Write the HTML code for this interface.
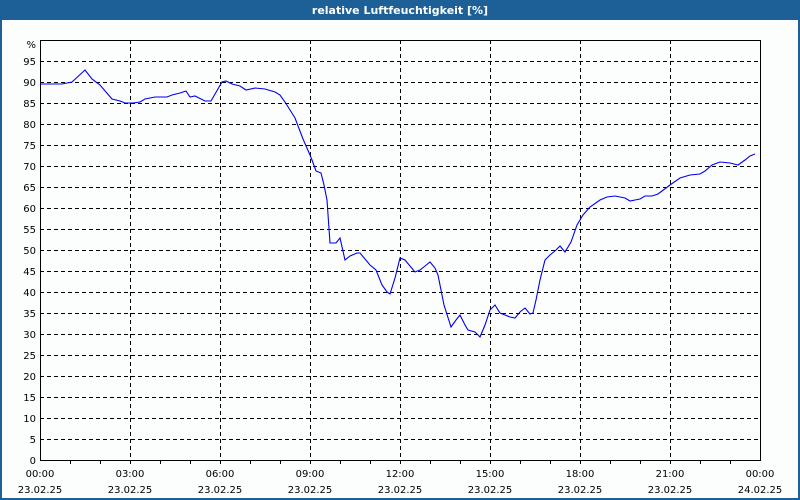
<!DOCTYPE html>
<html><head><meta charset="utf-8"><style>
html,body{margin:0;padding:0;background:#fff;}
body{width:800px;height:500px;position:relative;overflow:hidden;font-family:Tahoma,"DejaVu Sans","Liberation Sans",sans-serif;}
</style></head><body>
<svg width="800" height="500" xmlns="http://www.w3.org/2000/svg" style="position:absolute;left:0;top:0" font-family="'DejaVu Sans','Liberation Sans',sans-serif">
<rect x="0" y="0" width="800" height="500" fill="#1d5f97"/>
<rect x="2" y="20" width="796" height="478" fill="#fcfefd"/>
<text x="400" y="14" fill="#fff" font-size="11" font-weight="bold" text-anchor="middle">relative Luftfeuchtigkeit [%]</text>
<g stroke="#000" stroke-width="1" stroke-dasharray="4,3" shape-rendering="crispEdges">
<line x1="40" x2="760" y1="61.5" y2="61.5"/><line x1="40" x2="760" y1="82.5" y2="82.5"/><line x1="40" x2="760" y1="103.5" y2="103.5"/><line x1="40" x2="760" y1="124.5" y2="124.5"/><line x1="40" x2="760" y1="145.5" y2="145.5"/><line x1="40" x2="760" y1="166.5" y2="166.5"/><line x1="40" x2="760" y1="187.5" y2="187.5"/><line x1="40" x2="760" y1="208.5" y2="208.5"/><line x1="40" x2="760" y1="229.5" y2="229.5"/><line x1="40" x2="760" y1="250.5" y2="250.5"/><line x1="40" x2="760" y1="271.5" y2="271.5"/><line x1="40" x2="760" y1="292.5" y2="292.5"/><line x1="40" x2="760" y1="313.5" y2="313.5"/><line x1="40" x2="760" y1="334.5" y2="334.5"/><line x1="40" x2="760" y1="355.5" y2="355.5"/><line x1="40" x2="760" y1="376.5" y2="376.5"/><line x1="40" x2="760" y1="397.5" y2="397.5"/><line x1="40" x2="760" y1="418.5" y2="418.5"/><line x1="40" x2="760" y1="439.5" y2="439.5"/>
<line x1="130.5" x2="130.5" y1="40" y2="460"/><line x1="220.5" x2="220.5" y1="40" y2="460"/><line x1="310.5" x2="310.5" y1="40" y2="460"/><line x1="400.5" x2="400.5" y1="40" y2="460"/><line x1="490.5" x2="490.5" y1="40" y2="460"/><line x1="580.5" x2="580.5" y1="40" y2="460"/><line x1="670.5" x2="670.5" y1="40" y2="460"/>
</g>
<rect x="40.5" y="40.5" width="720" height="420" fill="none" stroke="#000" shape-rendering="crispEdges"/>
<g stroke="#000" shape-rendering="crispEdges">
<path d="M70.5 460v4M100.5 460v4M130.5 460v4M160.5 460v4M190.5 460v4M220.5 460v4M250.5 460v4M280.5 460v4M310.5 460v4M340.5 460v4M370.5 460v4M400.5 460v4M430.5 460v4M460.5 460v4M490.5 460v4M520.5 460v4M550.5 460v4M580.5 460v4M610.5 460v4M640.5 460v4M670.5 460v4M700.5 460v4M730.5 460v4"/>
</g>
<polyline fill="none" stroke="#0000ee" stroke-width="1.1" points="40,84 62,84 72,82 85,70 92,79 100,85 112,99 120,101 125,103 133,103 140,102 145,99 155,97 167,97 172,95 180,93 186,91 190,97 195,96 205,101 211,101 222,82 226,81 232,84 240,86 246,90 255,88 265,89 275,92 280,95 285,102 295,118 303,139 310,155 312,160 316,171 321,173 324,185 327,200 330,243 336,243 340,238 345,260 350,256 357,253 360,253 370,265 376,270 382,285 387,292 390,294 395,278 400,258 405,260 415,272 420,270 425,266 430,262 435,268 438,275 444,305 451,327 456,320 460,315 465,325 468,330 475,332 480,337 485,325 490,310 495,305 500,313 505,315 510,317 515,318 520,312 525,308 530,314 533,313 536,300 540,280 545,260 550,255 556,250 560,246 565,252 571,242 577,225 583,215 590,207 600,200 607,197 615,196 625,198 630,201 640,199 645,196 652,196 658,194 670,185 680,178 690,175 700,174 705,171 712,165 720,162 730,163 738,165 745,160 750,156 755,154"/>
<g font-size="10" fill="#000" text-anchor="end">
<text x="36" y="48">%</text>
<text x="36" y="65">95</text><text x="36" y="86">90</text><text x="36" y="107">85</text><text x="36" y="128">80</text><text x="36" y="149">75</text><text x="36" y="170">70</text><text x="36" y="191">65</text><text x="36" y="212">60</text><text x="36" y="233">55</text><text x="36" y="254">50</text><text x="36" y="275">45</text><text x="36" y="296">40</text><text x="36" y="317">35</text><text x="36" y="338">30</text><text x="36" y="359">25</text><text x="36" y="380">20</text><text x="36" y="401">15</text><text x="36" y="422">10</text><text x="36" y="443">5</text><text x="36" y="464">0</text>
</g>
<g font-size="10" fill="#000" text-anchor="middle">
<text x="40" y="477">00:00</text><text x="40" y="493">23.02.25</text>
<text x="130" y="477">03:00</text><text x="130" y="493">23.02.25</text>
<text x="220" y="477">06:00</text><text x="220" y="493">23.02.25</text>
<text x="310" y="477">09:00</text><text x="310" y="493">23.02.25</text>
<text x="400" y="477">12:00</text><text x="400" y="493">23.02.25</text>
<text x="490" y="477">15:00</text><text x="490" y="493">23.02.25</text>
<text x="580" y="477">18:00</text><text x="580" y="493">23.02.25</text>
<text x="670" y="477">21:00</text><text x="670" y="493">23.02.25</text>
<text x="760" y="477">00:00</text><text x="760" y="493">24.02.25</text>
</g>
</svg>
</body></html>
